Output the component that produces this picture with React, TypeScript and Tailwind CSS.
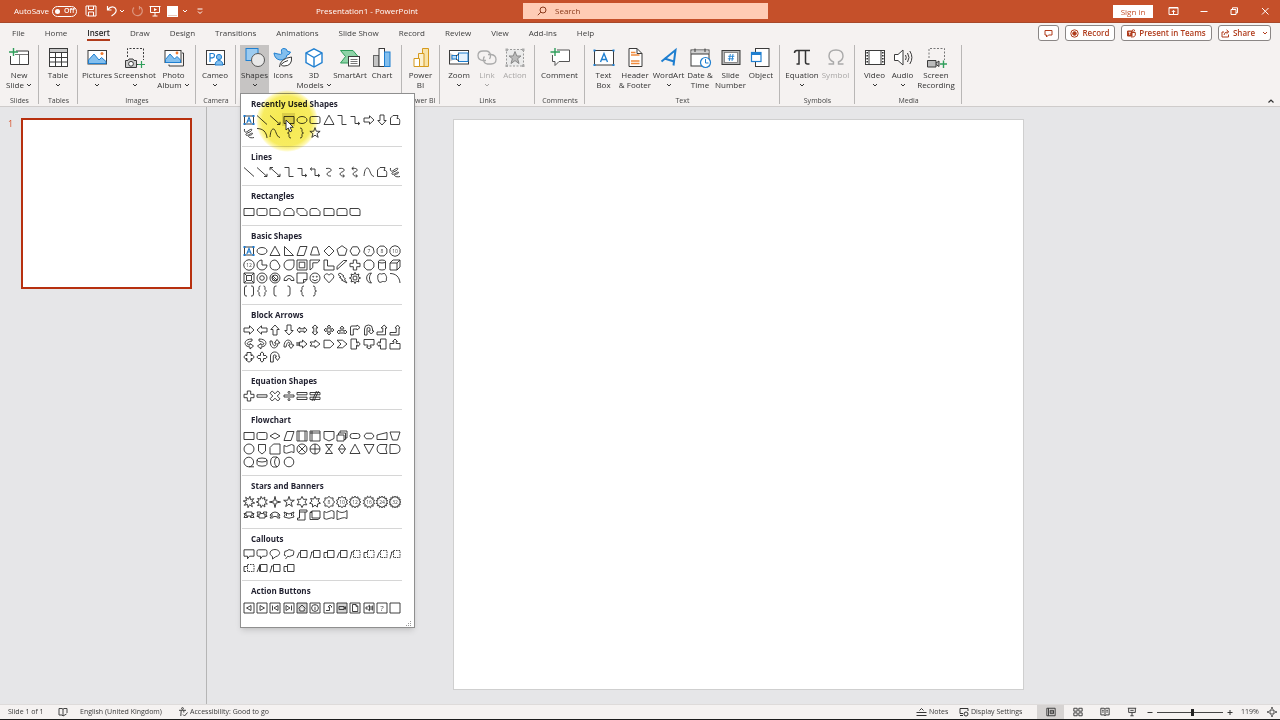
import React from "react";

/* ---------- geometry helpers for the shape gallery (12 x 12 tiles) ---------- */
const pt = (r: number, deg: number, cx = 6, cy = 6) =>
  `${(cx + r * Math.cos((deg * Math.PI) / 180)).toFixed(2)} ${(cy + r * Math.sin((deg * Math.PI) / 180)).toFixed(2)}`;
const poly = (n: number, r = 5, rot = -90) =>
  "M" + Array.from({ length: n }, (_, i) => pt(r, rot + (360 / n) * i)).join("L") + "Z";
const star = (n: number, r = 5, inner = 2.2, rot = -90) =>
  "M" + Array.from({ length: n * 2 }, (_, i) => pt(i % 2 ? inner : r, rot + (180 / n) * i)).join("L") + "Z";
const circ = (r: number, cx = 6, cy = 6) =>
  `M${cx - r} ${cy}a${r} ${r} 0 1 0 ${2 * r} 0a${r} ${r} 0 1 0 ${-2 * r} 0`;

const RECT = "M1 2.5H11V9.5H1Z";
const ROUND = "M2.5 2.5H9.5Q11 2.5 11 4V8Q11 9.5 9.5 9.5H2.5Q1 9.5 1 8V4Q1 2.5 2.5 2.5Z";
const SQUARE = "M1 1H11V11H1Z";
const OVAL = "M1 6a5 3.5 0 1 0 10 0a5 3.5 0 1 0 -10 0";
const TRI = "M6 1.2L11 10.5H1Z";
const LINE = "M1 1.5L11 10.5";
const LINE_ARROW = "M1 1.5L11 10.5M11 7.8V10.5H8";
const LINE_DOUBLE = "M1 1.5L11 10.5M11 7.8V10.5H8M1 4.2V1.5H4";
const ELBOW = "M1.5 1.5H6V10.5H10.5";
const ELBOW_ARROW = "M1.5 2.5H6V9.5H10.5M9 8L10.8 9.5L9 11";
const ELBOW_DOUBLE = "M1.5 3H6V9.5H10.5M9 8L10.8 9.5L9 11M3 1.5L1.2 3L3 4.5";
const CURVE = "M3 2.5C9 1.5 9.5 5 6 6C3 7 3.5 10.5 8 10";
const RIGHT = "M1 4H6.5V1.8L11 6L6.5 10.2V8H1Z";
const LEFT = "M11 4H5.5V1.8L1 6L5.5 10.2V8H11Z";
const UP = "M4 11V5.5H1.8L6 1L10.2 5.5H8V11Z";
const DOWN = "M4 1V6.5H1.8L6 11L10.2 6.5H8V1Z";
const FREEFORM = "M1.5 10.5V4L4 1.5H9L8 4.5C11 4 11 6 10.5 10.5Z";
const SCRIBBLE = "M1.5 2C1 5.5 2.5 6 5 4S9.5 1.5 8.5 3.5S2 6 3 8S9.5 4.5 9.5 6.5S4.5 8 5.5 9.5S9 11 11 10.5";
const ARC = "M1 1.5C7 1.5 10.5 5 11 11";
const WAVE_LINE = "M1 10C1.5 6 2 2 4.5 2S7 10 11 10.5";
const LBRACE = "M8 1Q6 1 6 2.5V4.5Q6 6 4.5 6Q6 6 6 7.5V9.5Q6 11 8 11";
const RBRACE = "M4 1Q6 1 6 2.5V4.5Q6 6 7.5 6Q6 6 6 7.5V9.5Q6 11 4 11";
const CROSS = "M4.3 1H7.7V4.3H11V7.7H7.7V11H4.3V7.7H1V4.3H4.3Z";
const CLEFT = "M4.5 2.5H11V9.5H4.5Z";

type Shape = { d: string; text?: string; box?: boolean; dashed?: string; shade?: boolean };
const s = (...d: string[]): Shape[] => d.map((v) => ({ d: v }));
const BOX: Shape = { d: "", box: true };
const numbered = (d: string, text: string): Shape => ({ d, text });

type Section = { title: string; shapes: Shape[] };
const sections: Section[] = [
  {
    title: "Recently Used Shapes",
    shapes: [
      BOX,
      ...s(LINE, LINE_ARROW, RECT, OVAL, ROUND, TRI, ELBOW, ELBOW_ARROW, RIGHT, DOWN, FREEFORM),
      ...s(SCRIBBLE, ARC, WAVE_LINE, LBRACE, RBRACE, star(5, 5.4, 2.2)),
    ],
  },
  {
    title: "Lines",
    shapes: s(
      LINE, LINE_ARROW, LINE_DOUBLE, ELBOW, ELBOW_ARROW, ELBOW_DOUBLE, CURVE,
      CURVE + "M6.8 8.5L8.5 10L6.8 11.4", CURVE + "M6.8 8.5L8.5 10L6.8 11.4M4.6 1L2.8 2.5L4.6 4",
      WAVE_LINE, FREEFORM, SCRIBBLE,
    ),
  },
  {
    title: "Rectangles",
    shapes: s(
      RECT,
      ROUND,
      "M1 2.5H8L11 5.5V9.5H1Z",
      "M3.5 2.5H8.5L11 5.5V9.5H1V5.5Z",
      "M1 2.5H8L11 5.5V9.5H4L1 6.5Z",
      "M3 2.5H8L11 5.5V9.5H1V4.5Q1 2.5 3 2.5Z",
      "M1 2.5H9Q11 2.5 11 4.5V9.5H1Z",
      "M3 2.5H9Q11 2.5 11 4.5V9.5H1V4.5Q1 2.5 3 2.5Z",
      "M1 2.5H9Q11 2.5 11 4.5V9.5H3Q1 9.5 1 7.5Z",
    ),
  },
  {
    title: "Basic Shapes",
    shapes: [
      BOX,
      ...s(OVAL, TRI, "M1.5 1.5L10.5 10.5H1.5Z", "M4 1.5H11L8 10.5H1Z", "M4 2H8L10.5 10H1.5Z", poly(4), poly(5, 5.3), "M3.5 1.8H8.5L11 6L8.5 10.2H3.5L1 6Z"),
      numbered(poly(7, 5.3), "7"),
      numbered(poly(8, 5.3, -67.5), "8"),
      numbered(poly(10, 5.3), "10"),
      numbered(poly(12, 5.3), "12"),
      ...s(
        "M6 1A5 5 0 1 0 11 6H6Z",
        "M6 1A5 5 0 1 0 11 7L8 2Z",
        "M11 1H6A5 5 0 1 0 11 6Z",
        SQUARE + "M3.2 3.2H8.8V8.8H3.2Z",
        "M1 1H11L8.5 3.8H3.8V8.5L1 11Z",
        "M1 1H4.5V7H11V11H1Z",
        "M1 10.5V7.5L7.5 1.5H11Z",
        CROSS,
        poly(8, 5.3, -67.5),
        "M2.5 2.5a3.5 1.5 0 1 0 7 0a3.5 1.5 0 1 0 -7 0V9.5a3.5 1.5 0 0 0 7 0V2.5",
        "M1 4L4 1H11V8L8 11H1ZM1 4H8V11M8 4L11 1",
        SQUARE + "M3.5 3.5H8.5V8.5H3.5ZM1 1L3.5 3.5M11 1L8.5 3.5M1 11L3.5 8.5M11 11L8.5 8.5",
        circ(5) + circ(2.3),
        circ(5) + circ(3) + "M3.9 3.9L8.1 8.1M2.7 4.8L7.2 9.3",
        "M1 8.5A5 5 0 0 1 11 8.5H8A2 2 0 0 0 4 8.5Z",
        "M1 1H11V7.5L7.5 11H1ZM7.5 11V7.5H11",
        circ(5) + circ(0.5, 4.2, 4.7) + circ(0.5, 7.8, 4.7) + "M3.3 7.5Q6 10 8.7 7.5",
        "M6 10.8L1.6 6C0 3 4 0 6 3.2C8 0 12 3 10.4 6Z",
        "M4 1L8 4L7 4.5L9.5 7L8.5 7.5L11 11L5.5 8L6.5 7.5L3.5 5.5L5 5L2 2.5Z",
        star(8, 5.6, 3.4) + circ(2),
        "M8.5 1C2 1 2 11 8.5 11C5.8 8.5 5.8 3.5 8.5 1Z",
        "M3 2C4.5 1 5 2.5 6 2S9 1 9.5 2.5S11 5 10.5 6S11 9 9.5 9.5S7 9 6 9.7S3 11 2.5 9S1.5 7 1.8 6S1 3 3 2Z",
        ARC,
        "M4 1H3Q1.5 1 1.5 3V9Q1.5 11 3 11H4M8 1H9Q10.5 1 10.5 3V9Q10.5 11 9 11H8",
        "M4.5 1Q3 1 3 2.5V4.5L1.5 6L3 7.5V9.5Q3 11 4.5 11M7.5 1Q9 1 9 2.5V4.5L10.5 6L9 7.5V9.5Q9 11 7.5 11",
        "M7.5 1H7Q5 1 5 3V9Q5 11 7 11H7.5",
        "M4.5 1H5Q7 1 7 3V9Q7 11 5 11H4.5",
        LBRACE,
        RBRACE,
      ),
    ],
  },
  {
    title: "Block Arrows",
    shapes: s(
      RIGHT, LEFT, UP, DOWN,
      "M1 6L3.8 3V4.8H8.2V3L11 6L8.2 9V7.2H3.8V9Z",
      "M6 1L9 3.8H7.2V8.2H9L6 11L3 8.2H4.8V3.8H3Z",
      "M6 1L7.8 2.8H6.9V5.1H9.2V4.2L11 6L9.2 7.8V6.9H6.9V9.2H7.8L6 11L4.2 9.2H5.1V6.9H2.8V7.8L1 6L2.8 4.2V5.1H5.1V2.8H4.2Z",
      "M6 2L8 4.2H6.9V7H9V6L11 8L9 10V9H3V10L1 8L3 6V7H5.1V4.2H4Z",
      "M1.5 11V3Q1.5 2 3 2H8V1L11 3.5L8 6V5H4.3V11Z",
      "M1.5 11V5A4 4 0 0 1 9.5 5V7H11L8.2 10L5.4 7H7V5A1.5 1.5 0 0 0 4 5V11Z",
      "M1 8H6.8V4H5L8.2 1L11 4H9.5V10.8H1Z",
      "M1 8.5H7.2V4H6L8.6 1L11 4H10V11H1Z",
      "M9 1C2 1 1 5 3 7.5Q5 9 7 9V11L10.5 8L7 5.5V7C3 7 3 4 9 3Z",
      "M3 1C10 1 11 5 9 7.5Q7 9 5 9V11L1.5 8L5 5.5V7C9 7 9 4 3 3Z",
      "M1 3C1 10 5 11 7.5 9Q9 7 9 5H11L8 1.5L5.5 5H7C7 9 4 9 3 3Z",
      "M1 9C1 2 5 1 7.5 3Q9 5 9 7H11L8 10.5L5.5 7H7C7 3 4 3 3 9Z",
      "M3.5 4H6.5V2L11 6L6.5 10V8H3.5ZM1 4V8M2.2 4V8",
      "M1 4H6V2L11 6L6 10V8H1L2.8 6Z",
      "M1 2.2H7L11 6L7 9.8H1Z",
      "M1 2.2H6.5L11 6L6.5 9.8H1L5 6Z",
      "M2 1H7.5V4.8H9V3.5L11.2 6L9 8.5V7.2H7.5V11H2Z",
      "M1 1.5H11V7H7.2V9H8.5L6 11L3.5 9H4.8V7H1Z",
      "M10 1H4.5V4.8H3V3.5L0.8 6L3 8.5V7.2H4.5V11H10Z",
      "M1 11H11V5.5H7.2V3.5H8.5L6 1L3.5 3.5H4.8V5.5H1Z",
      "M4 1.5H8V4.5H9V3.5L11.2 6L9 8.5V7.5H8V9H9L6 11.2L3 9H4V7.5H3V8.5L0.8 6L3 3.5V4.5H4Z",
      "M6 0.8L8 3H7.5V4.5H9V4L11.2 6L9 8V7.5H7.5V9H8L6 11.2L4 9H4.5V7.5H3V8L0.8 6L3 4V4.5H4.5V3H4Z",
      "M1.5 11V5A4.2 4 0 0 1 10 5V6H11L8.5 9.5L6 6H7.2V5A1.5 1.5 0 0 0 4.3 5V11Z",
    ),
  },
  {
    title: "Equation Shapes",
    shapes: s(
      CROSS,
      "M1 4.8H11V7.2H1Z",
      "M3.2 1L6 3.8L8.8 1L11 3.2L8.2 6L11 8.8L8.8 11L6 8.2L3.2 11L1 8.8L3.8 6L1 3.2Z",
      "M1 5H11V7H1Z" + circ(1, 6, 2.4) + circ(1, 6, 9.6),
      "M1 2.5H11V4.8H1ZM1 7.2H11V9.5H1Z",
      "M1 2.5H11V4.8H1ZM1 7.2H11V9.5H1ZM3 11L7.5 1M5 11L9.5 1",
    ),
  },
  {
    title: "Flowchart",
    shapes: s(
      RECT, ROUND, "M6 3L11 6L6 9L1 6Z", "M4 1.5H11L8 10.5H1Z",
      SQUARE + "M3 1V11M9 1V11", SQUARE + "M3 1V11M1 3H11",
      "M1 1.5H11V8.5L6 11L1 8.5Z",
      "M1 5H8V11H1ZM2.5 5V3H9.5V9.5H8M4 3V1H11V8H9.5",
      "M3.5 3.5H8.5Q11 3.5 11 6T8.5 8.5H3.5Q1 8.5 1 6T3.5 3.5Z",
      "M3.2 3.2H8.8L11 6L8.8 8.8H3.2L1 6Z",
      "M1 5L11 2.5V9.5H1Z", "M1 2H11L8.5 10H3.5Z",
      circ(5), "M2.5 1.5H9.5V8L6 11L2.5 8Z", "M4.5 1H11V11H1V4.5Z",
      "M1 2.5Q3.5 4.5 6 2.5T11 2.5V9.5Q8.5 8 6 9.5T1 9.5Z",
      circ(5) + "M2.5 2.5L9.5 9.5M9.5 2.5L2.5 9.5",
      circ(5) + "M6 1V11M1 6H11",
      "M2.5 1.5H9.5L2.5 10.5H9.5Z", "M6 1L9.5 6L6 11L2.5 6ZM2.5 6H9.5",
      TRI, "M1 1.5H11L6 10.8Z",
      "M4 1.5H11Q8.5 6 11 10.5H4Q1 9.5 1 6T4 1.5Z",
      "M1 1.5H6Q11 1.5 11 6T6 10.5H1Z",
      circ(4.8, 5.8, 6) + "M6 10.8H11",
      "M1 4a5 2 0 1 0 10 0a5 2 0 1 0 -10 0V8.2a5 2 0 0 0 10 0V4",
      "M4 1H8Q10.5 2 10.5 6T8 11H4Q1.5 10 1.5 6T4 1ZM8 1Q5.5 3 5.5 6T8 11",
      circ(4.8),
    ),
  },
  {
    title: "Stars and Banners",
    shapes: [
      ...s(star(8, 5.8, 2.8, -80), star(9, 5.7, 3.2, -60), star(4, 5.6, 1.5), star(5, 5.6, 2.2), star(6, 5.6, 3), star(7, 5.6, 3.2)),
      numbered(star(8, 5.8, 4.2), "8"),
      numbered(star(10, 5.8, 4.3), "10"),
      numbered(star(12, 6, 4.3), "12"),
      numbered(star(12, 6, 4.3, -75), "16"),
      numbered(star(14, 6, 4.4), "24"),
      numbered(star(16, 6, 4.5), "32"),
      ...s(
        "M1 4.5H3V3H9V4.5H11L10 6.5L11 8.5H7.5V7H4.5V8.5H1L2 6.5ZM3 4.5V7H4.5M9 4.5V7H7.5",
        "M1 3H4.5V4.5H7.5V3H11L10 5L11 7.5H9V9H3V7.5H1L2 5ZM3 7.5V5H4.5M9 7.5V5H7.5",
        "M1 6Q3 3 6 3T11 6L10 7.5L11 9H8.5L7.5 7.5H4.5L3.5 9H1L2 7.5ZM3 4.5V8M9 4.5V8",
        "M1 3L3.5 4Q6 6 8.5 4L11 3L10 5.5L11 8L9 8.5Q6 10 3 8.5L1 8L2 5.5ZM3.5 4V7M8.5 4V7",
        "M3.5 1H11V3H9V11H1.5V9H3.5ZM3.5 3H9M3.5 3V9",
        "M1 3.5L3 2H11V9L9 10.5H1ZM3 2V9H11M1 3.5H3",
        "M1 2.5Q3.5 4.5 6 2.5T11 2.5V9.5Q8.5 8 6 9.5T1 9.5Z",
        "M1 1.5L3.5 3Q6 4 8.5 3L11 1.5V9.5Q8.5 8 6 9T1 10.5Z",
      ),
    ],
  },
  {
    title: "Callouts",
    shapes: [
      ...s(
        "M1 1.8H11V8.2H6.5L4.5 10.8V8.2H1Z",
        "M2.5 1.8H9.5Q11 1.8 11 3.5V6.5Q11 8.2 9.5 8.2H6.5L4.5 10.8V8.2H2.5Q1 8.2 1 6.5V3.5Q1 1.8 2.5 1.8Z",
        "M3.5 8.5C-1 6 1 1.5 6 1.5S13 7 6.5 8.8L3.5 11Z",
        "M3 8Q0.5 8 1.5 5.5Q1 2.5 4 2.8Q6 0.5 8 2.2Q11.5 2 10.7 5Q11 8 8.2 7.8Q6 9.5 4.8 8.2L2.5 11",
        CLEFT + "M1 10L3.5 4",
        CLEFT + "M1 10.5L2.5 6V4H4.5",
        CLEFT + "M4.5 4.5H1V9.5H3",
        CLEFT + "M1 10L3.5 4",
      ),
      { d: "M1 10.5L2.5 6V4H4.5", dashed: CLEFT },
      { d: "M4.5 4.5H1V9.5H3", dashed: CLEFT },
      { d: "M1 10L3.5 4", dashed: CLEFT },
      { d: "M1 10.5L2.5 6V4H4.5", dashed: CLEFT },
      { d: "M4.5 4.5H1V9.5H3", dashed: CLEFT },
      ...s(CLEFT + "M1 10L3.5 4M3.5 2.5V9.5", CLEFT + "M1 10.5L2.5 6V4H4.5", CLEFT + "M4.5 4.5H1V9.5H3"),
    ],
  },
  {
    title: "Action Buttons",
    shapes: [
      ...s(
        SQUARE + "M8 3.5V8.5L3.5 6Z",
        SQUARE + "M4 3.5V8.5L8.5 6Z",
        SQUARE + "M9 3.5V8.5L5 6ZM3.5 3.5V8.5",
        SQUARE + "M3 3.5V8.5L7 6ZM8.5 3.5V8.5",
      ),
      { d: SQUARE + "M2.5 6.5L6 3L9.5 6.5M3.8 6.5V9H8.2V6.5", shade: true },
      { d: SQUARE + circ(3.4) + "M6 5V8M6 3.6V4.2" },
      { d: SQUARE + "M3 8.5H6.5V5H5L7 3L9 5H8" },
      { d: SQUARE + "M3 4.5H8V7.5H3ZM8 5.5L9.5 4.8V7.2L8 6.5", shade: true },
      { d: SQUARE + "M3.5 2.5H7L8.8 4.3V9.5H3.5ZM7 2.5V4.3H8.8" },
      { d: SQUARE + "M3 5H4.5L6.5 3.2V8.8L4.5 7H3ZM8 4V8M9.4 3.5V8.5" },
      { d: SQUARE, text: "?" },
      { d: SQUARE },
    ],
  },
];

function ShapeTile({ shape }: { shape: Shape }) {
  if (shape.box) {
    return (
      <svg viewBox="0 0 12 12" className="h-3 w-3" fill="none">
        <rect x="1.5" y="2" width="9" height="8" stroke="#2b2b2b" strokeWidth="0.9" />
        <path d="M3.8 9L6 3.2L8.2 9M4.6 7H7.4" stroke="#1b7ad0" strokeWidth="1.1" />
        <path d="M0.5 1H2.5V3H0.5ZM9.5 1H11.5V3H9.5ZM0.5 9H2.5V11H0.5ZM9.5 9H11.5V11H9.5Z" fill="#1b7ad0" />
      </svg>
    );
  }
  return (
    <svg viewBox="0 0 12 12" className="h-3 w-3 overflow-visible" fill="none" stroke="#2b2b2b" strokeWidth="0.9">
      <path d={shape.d} fill={shape.shade ? "#d4d4d4" : "none"} />
      {shape.dashed && <path d={shape.dashed} strokeDasharray="1.6 0.9" />}
      {shape.text && (
        <text x="6" y={shape.text === "?" ? 9 : 7.8} textAnchor="middle" fontSize={shape.text === "?" ? 8 : 5} fill="#444444" stroke="none">
          {shape.text}
        </text>
      )}
    </svg>
  );
}

/* ---------- small helpers ---------- */
const Chevron = ({ className = "" }: { className?: string }) => (
  <svg viewBox="0 0 6 4" className={`inline-block h-1 w-1.5 shrink-0 ${className}`} fill="none" stroke="currentColor" strokeWidth="1">
    <path d="M1 1L3 3L5 1" />
  </svg>
);

const Ico = ({ children }: { children: React.ReactNode }) => (
  <svg viewBox="0 0 20 20" className="h-5 w-5 shrink-0 overflow-visible" fill="none" stroke="#3b3b3b" strokeWidth="1">
    {children}
  </svg>
);

const GREEN = "#2f9e5b";
const BLUE = "#1f7fd0";
const SKY = "#83bfee";

const icons: Record<string, React.ReactNode> = {
  newSlide: (
    <>
      <path d="M8 3.5H19.5V16.5H1.5V7" fill="#fff" stroke="none" />
      <path d="M7 3H19.5V16.5H1.5V8" />
      <path d="M6 6.5H19M10.5 6.5V16" stroke="#777" />
      <path d="M4.5 0V8M0 4H9" stroke={GREEN} strokeWidth="1.4" />
    </>
  ),
  table: (
    <>
      <rect x="1.5" y="0.5" width="18" height="18" fill="#fff" />
      <rect x="2" y="1" width="17" height="3" fill="#c8c8c8" stroke="none" />
      <path d="M1.5 4.5H19.5M1.5 9.5H19.5M1.5 14H19.5M7.5 4.5V18.5M13.5 4.5V18.5" />
    </>
  ),
  pictures: (
    <>
      <rect x="1" y="2.5" width="18.5" height="13.5" fill="#fff" />
      <path d="M1.5 12L7 6L12 12L14.5 9.5L19 13.5V15.5H1.5Z" fill={SKY} stroke={BLUE} />
      <circle cx="15" cy="5.5" r="1.5" fill="#f07a30" stroke="none" />
    </>
  ),
  screenshot: (
    <>
      <path d="M2.5 9V0.5H18.5V12M11 16.5H13" strokeDasharray="2 1.5" />
      <path d="M0.5 12.5H3L4 11H8L9 12.5H11.5V19.5H0.5Z" fill="#ccc" />
      <circle cx="6" cy="15.8" r="2.4" fill="#fff" />
      <path d="M16.5 13V20M13 16.5H20" stroke={GREEN} strokeWidth="1.2" />
    </>
  ),
  album: (
    <>
      <path d="M5 16.5V18H19.5V5H18" />
      <rect x="1" y="2.5" width="16" height="12" fill="#fff" />
      <path d="M1.5 11.5L6 6L10.5 11L13 8.5L16.5 12V14.5H1.5Z" fill={SKY} stroke={BLUE} />
      <circle cx="13" cy="5" r="1.4" fill="#f07a30" stroke="none" />
    </>
  ),
  cameo: (
    <>
      <rect x="1.5" y="2.5" width="18" height="14" fill="#fff" />
      <path d="M5 14V5.5H7.5Q9.5 5.5 9.5 7.5T7.5 9.8H5" stroke={BLUE} strokeWidth="1.2" />
      <circle cx="14" cy="9" r="2.6" fill={SKY} stroke={BLUE} />
      <path d="M10 17Q10.5 12.5 14 12.5T18 17Z" fill={SKY} stroke={BLUE} />
    </>
  ),
  shapes: (
    <>
      <rect x="1" y="0.5" width="12" height="12" fill="#9ccbf0" stroke={BLUE} />
      <circle cx="13" cy="12" r="6.5" fill="#e8e8e8" stroke="#555" />
    </>
  ),
  icons: (
    <>
      <path d="M1 5L5 6Q8 7 9 5.5Q7 0.5 11 0.5Q14 0.5 14.5 3.5L17.5 4Q16.5 7 14 7Q13 12 7 12Q1.5 11 1 5Z" fill={SKY} stroke={BLUE} />
      <path d="M6.5 19Q7 10.5 18.5 9Q19.5 18 11 18Q9 18 8 16.5M8 16.5Q11 13.5 15 12.5" fill="#fff" />
    </>
  ),
  cube: (
    <>
      <path d="M10 0.8L18 5V14.5L10 19L2 14.5V5Z" fill="#fff" stroke={BLUE} strokeWidth="1.4" />
      <path d="M2 5L10 9.5L18 5M10 9.5V19" stroke={BLUE} strokeWidth="1.4" />
    </>
  ),
  smartart: (
    <>
      <path d="M0.5 2.5H13L18 8.5L13 15H0.5L5.5 8.5Z" fill="#8ed3a7" stroke={GREEN} />
      <rect x="8.5" y="8.5" width="11" height="9.5" fill="#fff" />
      <path d="M10.5 11.5H17.5M10.5 13.5H17.5M10.5 15.5H17.5" stroke="#777" />
    </>
  ),
  chart: (
    <>
      <rect x="1.5" y="7.5" width="5.5" height="11" fill="#c4c4c4" stroke="#666" />
      <rect x="7" y="0.5" width="5.5" height="18" fill="#fff" />
      <rect x="12.5" y="4" width="5.5" height="14.5" fill={SKY} stroke={BLUE} />
    </>
  ),
  powerbi: (
    <>
      <path d="M11.5 0.5H17.5V18.5H11.5Z" fill="#f8e3a8" stroke="#d59a1d" />
      <path d="M7.5 5.5H13V18.5H7.5Z" fill="#fbf0cf" stroke="#d59a1d" />
      <path d="M3 10.5H8.5V18.5H3Z" fill="#fff" stroke="#d59a1d" />
    </>
  ),
  zoom: (
    <>
      <rect x="0.5" y="2.5" width="19" height="13.5" fill="#fff" />
      <path d="M1 5L7 8V10.5L1 13.5Z" fill="#c8c8c8" stroke="none" />
      <rect x="9.5" y="5" width="9.5" height="8.5" fill="#e6f2fc" stroke={BLUE} />
      <rect x="3" y="7.5" width="4.5" height="3.5" fill="#bcdcf5" stroke={BLUE} />
      <path d="M7 8L10 6M7 11L10 13" stroke="#333" />
    </>
  ),
  link: (
    <>
      <path d="M9 12.5H6Q1 12 1 7.5T6 3H9.5Q13.5 3.5 13.5 8Q13.5 9.5 12.5 11" stroke="#aaa" strokeWidth="1.3" />
      <path d="M11 6.5H14Q19 7 19 11.5T14 16H10.5Q6.5 15.5 6.5 11Q6.5 9.5 7.5 8.5" stroke="#aaa" strokeWidth="1.3" />
    </>
  ),
  action: (
    <>
      <rect x="1.5" y="1.5" width="17" height="16.5" fill="#ebebeb" stroke="#999" strokeDasharray="2 1.5" />
      <path d="M10 3.5L11.8 8H16L12.6 10.7L14 15.5L10 12.6L6 15.5L7.4 10.7L4 8H8.2Z" fill="#bbb" stroke="#888" />
      <path d="M0.5 0.5H3V3H0.5ZM17 0.5H19.5V3H17ZM0.5 16.5H3V19H0.5ZM17 16.5H19.5V19H17Z" fill="#aaa" stroke="none" />
    </>
  ),
  comment: (
    <>
      <path d="M7 2H19.5V13.5H9L5 17.5V13.5H2.5V7" fill="#fff" stroke="#555" />
      <path d="M5 0V8M0.5 4H10" stroke={GREEN} strokeWidth="1.4" />
    </>
  ),
  textbox: (
    <>
      <rect x="0.5" y="2.5" width="19" height="14.5" fill="#fff" />
      <path d="M6.5 14L10 5.5L13.5 14M7.6 11.5H12.4" stroke={BLUE} strokeWidth="1.4" />
      <path d="M-0.5 1.5H1.5V3.5H-0.5ZM18.5 1.5H20.5V3.5H18.5ZM-0.5 16H1.5V18H-0.5ZM18.5 16H20.5V18H18.5Z" fill={BLUE} stroke="none" />
    </>
  ),
  header: (
    <>
      <path d="M4 0.5H12L17 5.5V18.5H4Z" fill="#fff" />
      <path d="M12 0.5V5.5H17" />
      <path d="M6 4.5H10.5M6 7H14.5M6 13H14.5M6 15.5H14.5" stroke="#f08a3c" strokeWidth="1.4" />
    </>
  ),
  wordart: <path d="M2.5 13.5L16.5 2L14.5 17.5M5.5 10.5L15 13.5" stroke={BLUE} strokeWidth="2" />,
  date: (
    <>
      <rect x="1" y="2" width="18" height="16" fill="#fff" />
      <rect x="1.5" y="2.5" width="17" height="3.5" fill="#d0d0d0" stroke="none" />
      <path d="M1 6H19M5 0.5V4M15 0.5V4" />
      <circle cx="15.5" cy="14.5" r="5" fill="#fff" stroke={BLUE} strokeWidth="1.2" />
      <path d="M15.5 11V15H18.5" stroke={BLUE} />
    </>
  ),
  number: (
    <>
      <rect x="1" y="2.5" width="18" height="14" fill="#b8b8b8" />
      <rect x="3.5" y="4.5" width="13" height="10" fill="#fff" stroke="#777" strokeWidth="0.8" />
      <path d="M9.3 6L8.3 13M12 6L11 13M7.2 8.3H13.3M6.8 10.8H12.9" stroke={BLUE} strokeWidth="0.9" />
    </>
  ),
  object: (
    <>
      <rect x="4.5" y="0.5" width="13.5" height="18" fill="#fff" />
      <rect x="0.5" y="4.5" width="9.5" height="9" fill="#fff" stroke={BLUE} strokeWidth="1.2" />
      <path d="M0.5 6H10" stroke={BLUE} strokeWidth="2" />
    </>
  ),
  pi: <path d="M2.5 5Q2.5 2.5 5 2.5H18M7 2.5V16H4.5M13.5 2.5V14Q13.5 16 15.5 16H17.5" stroke="#333" strokeWidth="1.5" />,
  omega: <path d="M2.5 16H7.5V14Q3 12 3 8Q3 2 10 2T17 8Q17 12 12.5 14V16H17.5" stroke="#aaa" strokeWidth="1.4" />,
  video: (
    <>
      <rect x="0.5" y="2.5" width="19" height="14" fill="#fff" />
      <path d="M4 3V16M16 3V16" />
      <path d="M2.2 4V16M17.8 4V16" stroke="#333" strokeWidth="1.6" strokeDasharray="1.6 1.4" />
    </>
  ),
  audio: (
    <>
      <path d="M1.5 6.5H5L10 2V17L5 12.5H1.5Z" fill="#fff" />
      <path d="M12.5 7Q14 9.5 12.5 12M14.5 5Q17.5 9.5 14.5 14M16.8 3Q21 9.5 16.8 16" />
    </>
  ),
  recording: (
    <>
      <path d="M3 10V0.5H18.5V12" strokeDasharray="2 1.5" stroke="#777" />
      <path d="M1.5 12.5H10V19H1.5ZM10 15L13 13V18.5L10 16.5" fill="#bbb" />
      <path d="M17.5 12.5V20M14 16H21" stroke={GREEN} strokeWidth="1.4" />
    </>
  ),
};

type Tool = { icon: string; lines: string[]; width: string; more?: boolean; off?: boolean };
type Group = { id: string; label: string; width: string; pad: string; tools: Tool[] };
const groups: Group[] = [
  { id: "slides", label: "Slides", width: "w-[39px]", pad: "pl-0", tools: [{ icon: "newSlide", lines: ["New", "Slide"], width: "w-[38px]", more: true }] },
  { id: "tables", label: "Tables", width: "w-[39px]", pad: "pl-0", tools: [{ icon: "table", lines: ["Table"], width: "w-[38px]", more: true }] },
  {
    id: "images", label: "Images", width: "w-[118px]", pad: "pl-[2px]",
    tools: [
      { icon: "pictures", lines: ["Pictures"], width: "w-[34px]", more: true },
      { icon: "screenshot", lines: ["Screenshot"], width: "w-[42px]", more: true },
      { icon: "album", lines: ["Photo", "Album"], width: "w-[35px]", more: true },
    ],
  },
  { id: "camera", label: "Camera", width: "w-[40px]", pad: "pl-0", tools: [{ icon: "cameo", lines: ["Cameo"], width: "w-[38px]", more: true }] },
  {
    id: "illustrations", label: "", width: "w-[166px]", pad: "pl-[4px]",
    tools: [
      { icon: "shapes", lines: ["Shapes"], width: "w-[29px]", more: true },
      { icon: "icons", lines: ["Icons"], width: "w-[28px]" },
      { icon: "cube", lines: ["3D", "Models"], width: "w-[34px]", more: true },
      { icon: "smartart", lines: ["SmartArt"], width: "w-[38px]" },
      { icon: "chart", lines: ["Chart"], width: "w-[26px]" },
    ],
  },
  { id: "powerbi", label: "Power BI", width: "w-[38px]", pad: "pl-0", tools: [{ icon: "powerbi", lines: ["Power", "BI"], width: "w-[37px]" }] },
  {
    id: "links", label: "Links", width: "w-[95px]", pad: "pl-[5px]",
    tools: [
      { icon: "zoom", lines: ["Zoom"], width: "w-[28px]", more: true },
      { icon: "link", lines: ["Link"], width: "w-[28px]", more: true, off: true },
      { icon: "action", lines: ["Action"], width: "w-[28px]", off: true },
    ],
  },
  { id: "comments", label: "Comments", width: "w-[50px]", pad: "pl-0", tools: [{ icon: "comment", lines: ["Comment"], width: "w-[49px]" }] },
  {
    id: "text", label: "Text", width: "w-[195px]", pad: "pl-[3px]",
    tools: [
      { icon: "textbox", lines: ["Text", "Box"], width: "w-[31px]" },
      { icon: "header", lines: ["Header", "& Footer"], width: "w-[32px]" },
      { icon: "wordart", lines: ["WordArt"], width: "w-[35px]", more: true },
      { icon: "date", lines: ["Date &", "Time"], width: "w-[28px]" },
      { icon: "number", lines: ["Slide", "Number"], width: "w-[33px]" },
      { icon: "object", lines: ["Object"], width: "w-[28px]" },
    ],
  },
  {
    id: "symbols", label: "Symbols", width: "w-[75px]", pad: "pl-[4px]",
    tools: [
      { icon: "pi", lines: ["Equation"], width: "w-[36px]", more: true },
      { icon: "omega", lines: ["Symbol"], width: "w-[31px]", off: true },
    ],
  },
  {
    id: "media", label: "Media", width: "w-[107px]", pad: "pl-[5px]",
    tools: [
      { icon: "video", lines: ["Video"], width: "w-[29px]", more: true },
      { icon: "audio", lines: ["Audio"], width: "w-[27px]", more: true },
      { icon: "recording", lines: ["Screen", "Recording"], width: "w-[40px]" },
    ],
  },
];

function ShapesMenu() {
  return (
    <div className="absolute top-12 left-[4px] z-20 flex h-[535px] w-[175px] flex-col border border-[#8f8f8f] bg-white shadow-md">
      <div className="grid min-h-0 flex-1 grid-rows-[4fr_3fr_3fr_6fr_5fr_3fr_5fr_4fr_4fr_3fr] pl-px">
        {sections.map((sec, si) => (
          <section
            key={sec.title}
            className={`flex min-h-0 w-40 flex-col pb-[6px] ${si < sections.length - 1 ? "border-b border-[#d6d6d6]" : ""}`}
          >
            <h3 className="h-[19px] pl-[9px] text-left text-[8px] leading-[20px] font-bold whitespace-nowrap text-[#1f1f2e]">{sec.title}</h3>
            <div className="grid min-h-0 flex-1 auto-rows-fr grid-cols-12">
              {sec.shapes.map((shape, i) => (
                <button
                  key={i}
                  aria-label={`${sec.title} ${i + 1}`}
                  className={`flex min-h-0 items-center justify-center ${si === 0 && i === 3 ? "bg-[#e3e0dc]" : ""}`}
                >
                  <ShapeTile shape={shape} />
                </button>
              ))}
            </div>
          </section>
        ))}
      </div>
      <div className="flex h-[6px] shrink-0 items-end justify-end pr-0.5">
        <svg viewBox="0 0 6 6" className="h-1.5 w-1.5" fill="#999">
          <path d="M4 0H5V1H4ZM4 2H5V3H4ZM2 2H3V3H2ZM4 4H5V5H4ZM2 4H3V5H2ZM0 4H1V5H0Z" />
        </svg>
      </div>
    </div>
  );
}

function PointerSpot() {
  return (
    <>
      <div className="pointer-events-none absolute top-[45px] left-[20px] z-30 h-[62px] w-[62px] rounded-full bg-[radial-gradient(circle_closest-side,#f5e94e_0%,#f7ec60_80%,#fff9b8_94%,#ffffff_100%)] mix-blend-multiply" />
      <svg viewBox="0 0 10 14" className="pointer-events-none absolute top-[74px] left-[49px] z-40 h-3.5 w-2.5" fill="#fff" stroke="#222" strokeWidth="0.9">
        <path d="M1 1V11L3.3 9L5 12.8L6.8 12L5.2 8.3H8.3Z" />
      </svg>
    </>
  );
}

function ToolButton({ tool }: { tool: Tool }) {
  const open = tool.icon === "shapes";
  const inlineChevron = tool.more && tool.lines.length === 2;
  return (
    <button
      className={`flex h-12 shrink-0 flex-col items-center pt-[3px] text-[8px] leading-[11px] whitespace-nowrap ${tool.width} ${
        open ? "bg-[#c6c4c3]" : ""
      } ${tool.off ? "text-[#a9a7a6]" : "text-[#333333]"}`}
    >
      <Ico>{icons[tool.icon]}</Ico>
      <span className="mt-px">{tool.lines[0]}</span>
      {tool.lines[1] ? (
        <span className="-mt-px flex items-center gap-0.5">
          {tool.lines[1]}
          {inlineChevron && <Chevron />}
        </span>
      ) : (
        tool.more && (
          <span className="-mt-px flex h-[11px] items-center">
            <Chevron />
          </span>
        )
      )}
    </button>
  );
}

const tabs = ["File", "Home", "Insert", "Draw", "Design", "Transitions", "Animations", "Slide Show", "Record", "Review", "View", "Add-ins", "Help"];

function TitleBar() {
  return (
    <header className="flex h-[23px] shrink-0 items-center border-b border-[#a8492a] bg-[#c5502a] text-[8px] text-white">
      <div className="flex w-[316px] shrink-0 items-center pl-[14px]">
        <label htmlFor="autosave" className="w-[38px]">AutoSave</label>
        <button id="autosave" role="switch" aria-checked="false" className="flex h-[11px] w-[25px] items-center gap-1 rounded-full border border-white pl-[2px] text-[7px] font-semibold">
          <span className="h-[5px] w-[5px] rounded-full bg-white" />
          Off
        </button>
        <button aria-label="Save" className="ml-[8px]">
          <svg viewBox="0 0 12 12" className="h-3 w-3" fill="none" stroke="#fff" strokeWidth="1">
            <path d="M1 1H11V11H2.5L1 9.5ZM3.5 1V4.5H8.5V1M3.5 11V7H8.5V11" />
          </svg>
        </button>
        <button aria-label="Undo" className="ml-[9px] flex items-center">
          <svg viewBox="0 0 12 12" className="h-3 w-3" fill="none" stroke="#fff" strokeWidth="1.2">
            <path d="M1.5 1V5H5.5M1.5 5Q4.5 1 8 2.2Q11 4 9.8 7Q9 9 5.5 11" />
          </svg>
          <Chevron className="ml-px" />
        </button>
        <button aria-label="Redo" className="ml-[6px] opacity-40">
          <svg viewBox="0 0 12 12" className="h-3 w-3" fill="none" stroke="#fff" strokeWidth="1.2">
            <path d="M8.5 1.5A4.8 4.8 0 1 1 3 2.5M8.5 1V4.5" />
          </svg>
        </button>
        <button aria-label="Start slide show" className="ml-[6px]">
          <svg viewBox="0 0 12 12" className="h-3 w-3" fill="none" stroke="#fff" strokeWidth="1">
            <path d="M0.5 1.5H11.5M1.5 1.5V7.5H10.5V1.5M6 7.5V11M3.5 11H8.5" />
            <path d="M5 3L8 4.6L5 6.2Z" fill="#fff" stroke="none" />
          </svg>
        </button>
        <button aria-label="Fill colour" className="ml-[6px] flex items-center gap-1">
          <span className="flex h-[11px] w-[11px] flex-col justify-end bg-white p-px">
            <span className="h-px bg-[#e9c9bd]" />
          </span>
          <Chevron />
        </button>
        <button aria-label="Customise toolbar" className="ml-[8px]">
          <svg viewBox="0 0 8 8" className="h-2 w-2" fill="none" stroke="#fff">
            <path d="M1.5 2H6.5M2 4.5L4 6.5L6 4.5" />
          </svg>
        </button>
      </div>
      <div className="w-[207px] shrink-0 whitespace-nowrap">Presentation1 - PowerPoint</div>
      <label className="flex h-4 w-[245px] items-center gap-2 bg-[#ffccb5] pl-[14px] text-[#8a3a1c]">
        <svg viewBox="0 0 10 10" className="h-2.5 w-2.5 shrink-0" fill="none" stroke="currentColor">
          <circle cx="6" cy="4" r="3" />
          <path d="M3.8 6.2L0.8 9.2" />
        </svg>
        <input type="text" aria-label="Search" placeholder="Search" className="min-w-0 flex-1 bg-transparent outline-none placeholder:text-[#8a3a1c] placeholder:opacity-100" />
      </label>
      <div className="ml-auto flex items-center pr-[10px]">
        <button className="h-[13px] w-10 bg-white leading-[13px] text-[#c5502a]">Sign in</button>
        <button aria-label="Ribbon display options" className="ml-[15px]">
          <svg viewBox="0 0 11 10" className="h-2.5 w-[11px]" fill="none" stroke="#fff">
            <path d="M1 1.5H10V8.5H1Z" />
            <path d="M1 2H10M5.5 8V4.5M3.8 6L5.5 4.3L7.2 6" />
          </svg>
        </button>
        <button aria-label="Minimise" className="ml-[20px]">
          <svg viewBox="0 0 10 10" className="h-2.5 w-2.5" stroke="#fff">
            <path d="M1.5 5.5H8.5" />
          </svg>
        </button>
        <button aria-label="Restore" className="ml-[20px]">
          <svg viewBox="0 0 10 10" className="h-2.5 w-2.5" fill="none" stroke="#fff">
            <path d="M2 3.5H7V8.5H2ZM3.5 3.5V1.8H8.5V6.8H7" />
          </svg>
        </button>
        <button aria-label="Close" className="ml-[21px]">
          <svg viewBox="0 0 10 10" className="h-2.5 w-2.5" fill="none" stroke="#fff">
            <path d="M2 2L8.5 8.5M8.5 2L2 8.5" />
          </svg>
        </button>
      </div>
    </header>
  );
}

const actionClass = "flex h-4 items-center justify-center gap-[3px] rounded-[3px] border border-[#8a8685] bg-white text-[8px] font-semibold whitespace-nowrap text-[#b03c1c]";

function TabRow() {
  return (
    <div className="flex h-[22px] shrink-0 items-center pr-[9px] pl-[12px]">
      <nav className="flex h-full gap-5 text-[8px]">
        {tabs.map((t) => (
          <a key={t} href="#" className={`flex flex-col pt-[4px] leading-[12px] whitespace-nowrap ${t === "Insert" ? "font-semibold text-[#262626]" : "text-[#3d3d3d]"}`}>
            {t}
            {t === "Insert" && <span className="h-[2px] bg-[#b03c1c]" />}
          </a>
        ))}
      </nav>
      <div className="ml-auto flex items-center gap-[6px] pb-[2px]">
        <button aria-label="Comments" className={`${actionClass} w-[21px]`}>
          <svg viewBox="0 0 9 9" className="h-[9px] w-[9px]" fill="none" stroke="currentColor">
            <path d="M1 1.5H8V6H4.5L2.5 8V6H1Z" />
          </svg>
        </button>
        <button className={`${actionClass} w-[50px]`}>
          <svg viewBox="0 0 9 9" className="h-[9px] w-[9px] shrink-0" fill="none" stroke="currentColor">
            <circle cx="4.5" cy="4.5" r="3.7" />
            <circle cx="4.5" cy="4.5" r="1.8" fill="currentColor" />
          </svg>
          Record
        </button>
        <button className={`${actionClass} w-[91px]`}>
          <svg viewBox="0 0 9 9" className="h-[9px] w-[9px] shrink-0" fill="none" stroke="currentColor">
            <path d="M0.5 2H5V7H0.5Z" fill="currentColor" />
            <path d="M1.5 3.3H4M2.7 3.3V6" stroke="#fff" strokeWidth="0.8" />
            <path d="M5 3.5H8.3V6.5Q7.5 8.3 4 8M6.5 0.7A1 1 0 1 1 6.4 0.7" />
          </svg>
          Present in Teams
        </button>
        <button className={`${actionClass} w-[53px]`}>
          <svg viewBox="0 0 9 9" className="h-[9px] w-[9px] shrink-0" fill="none" stroke="currentColor">
            <path d="M3 3H1V8H7.5V5.5M3 6Q3.2 3 7 2.8M5.5 0.8L7.8 2.8L5.5 4.8" />
          </svg>
          Share
          <Chevron className="ml-1" />
        </button>
      </div>
    </div>
  );
}

function Ribbon() {
  return (
    <div className="flex h-[62px] shrink-0 border-b border-[#cfcccb]">
      {groups.map((g) => (
        <div key={g.id} className={`relative flex shrink-0 flex-col ${g.width}`}>
          <div className={`flex ${g.pad}`}>
            {g.tools.map((t) => (
              <ToolButton key={t.icon} tool={t} />
            ))}
          </div>
          <div className="flex h-[13px] items-center justify-center pt-[3px] text-[7px] leading-[10px] whitespace-nowrap text-[#444444]">{g.label}</div>
          <span className="absolute top-0 right-0 h-[59px] w-px bg-[#b9b7b6]" />
          {g.id === "illustrations" && (
            <>
              <ShapesMenu />
              <PointerSpot />
            </>
          )}
        </div>
      ))}
      <button aria-label="Collapse ribbon" className="mt-auto mr-[5px] mb-px ml-auto h-2 w-2 text-[#333]">
        <svg viewBox="0 0 8 8" className="h-2 w-2" fill="none" stroke="currentColor" strokeWidth="1.2">
          <path d="M1.5 5.5L4 3L6.5 5.5" />
        </svg>
      </button>
    </div>
  );
}

const viewIcons: [string, string][] = [
  ["Normal view", "M1 1.5H11V10.5H1ZM3 1.5V10.5M5 4H9V8H5ZM5 6H9"],
  ["Slide sorter", "M1 1.5H5V5H1ZM7 1.5H11V5H7ZM1 7H5V10.5H1ZM7 7H11V10.5H7Z"],
  ["Reading view", "M6 2.5V10.5M1 1.5H5L6 2.5L7 1.5H11V9.5H7L6 10.5L5 9.5H1ZM2.5 4H4.5M2.5 6H4.5M7.5 4H9.5M7.5 6H9.5"],
  ["Slide show", "M1 1.5H11M2 1.5V6.5H10V1.5M6 6.5V10.5M4 10.5H8M4 4H8"],
];

function StatusBar() {
  return (
    <footer className="flex h-4 shrink-0 items-center border-t border-b border-t-[#dedbda] border-b-[#1c1c1c] bg-[#f5f2f1] text-[7px] whitespace-nowrap text-[#3a3a3a]">
      <span className="w-[51px] pl-2">Slide 1 of 1</span>
      <button aria-label="Spelling" className="w-[29px] pl-[7px]">
        <svg viewBox="0 0 10 10" className="h-2.5 w-2.5" fill="none" stroke="#444">
          <path d="M5 2V9M1 1.5H4L5 2.2L6 1.5H9V6M1 1.5V8H4L5 9L8.5 7" />
        </svg>
      </button>
      <button className="w-[98px] text-left">English (United Kingdom)</button>
      <button className="flex items-center gap-0.5">
        <svg viewBox="0 0 10 10" className="h-2.5 w-2.5" fill="none" stroke="#444">
          <circle cx="4.5" cy="1.5" r="0.9" />
          <path d="M1 3.3H8M3.2 3.3L2.8 9M5.8 3.3V5.5M5 7.5L6.5 9L9.5 5.5" />
        </svg>
        Accessibility: Good to go
      </button>
      <div className="ml-auto flex h-full items-center pr-[3px]">
        <button className="flex w-[43px] items-center gap-0.5">
          <svg viewBox="0 0 11 10" className="h-2.5 w-[11px]" fill="none" stroke="#333">
            <path d="M0.5 5.5H10.5M0.5 8.5H10.5M3.5 3.5L5.5 1.5L7.5 3.5" />
          </svg>
          Notes
        </button>
        <button className="flex w-[78px] items-center gap-0.5">
          <svg viewBox="0 0 10 10" className="h-2.5 w-2.5" fill="none" stroke="#333">
            <path d="M4 6.5H1V1.5H9V4M1 8.5H4" />
            <circle cx="7" cy="7" r="2" />
          </svg>
          Display Settings
        </button>
        {viewIcons.map(([name, d], i) => (
          <button key={name} aria-label={name} className={`flex h-full w-[27px] items-center justify-center ${i === 0 ? "bg-[#d6d3d2]" : ""}`}>
            <svg viewBox="0 0 12 12" className="h-2.5 w-2.5" fill="none" stroke="#333" strokeWidth="1.1">
              <path d={d} />
            </svg>
          </button>
        ))}
        <button aria-label="Zoom out" className="ml-px w-2">
          <svg viewBox="0 0 8 8" className="h-2 w-2" stroke="#333"><path d="M1.5 4.5H6.5" /></svg>
        </button>
        <input
          type="range"
          aria-label="Zoom"
          min={10}
          max={400}
          defaultValue={218}
          className="mx-[3px] h-2 w-[66px] appearance-none bg-[linear-gradient(#444,#444)] bg-[length:100%_1px] bg-center bg-no-repeat [&::-webkit-slider-thumb]:h-[7px] [&::-webkit-slider-thumb]:w-[3px] [&::-webkit-slider-thumb]:appearance-none [&::-webkit-slider-thumb]:bg-[#222]"
        />
        <button aria-label="Zoom in" className="w-2">
          <svg viewBox="0 0 8 8" className="h-2 w-2" stroke="#333"><path d="M1.5 4.5H6.5M4 2V7" /></svg>
        </button>
        <span className="ml-[7px] w-[26px]">119%</span>
        <button aria-label="Fit slide to window">
          <svg viewBox="0 0 10 10" className="h-2.5 w-2.5" fill="none" stroke="#333" strokeWidth="0.9">
            <path d="M3 3H7V7H3ZM5 0.5V2M5 8V9.5M0.5 5H2M8 5H9.5M4 1.3L5 0.5L6 1.3M4 8.7L5 9.5L6 8.7M1.3 4L0.5 5L1.3 6M8.7 4L9.5 5L8.7 6" />
          </svg>
        </button>
      </div>
    </footer>
  );
}

export default function App() {
  return (
    <div className="flex h-screen flex-col overflow-hidden bg-[#f5f2f1] font-['Open_Sans','Noto_Sans',sans-serif]">
      <TitleBar />
      <TabRow />
      <Ribbon />
      <main className="flex min-h-0 flex-1 bg-[#e6e6e8]">
        <aside className="flex w-[207px] shrink-0 items-start gap-[8px] border-r border-[#b5b5b5] pt-[11px] pl-[8px]">
          <span className="w-[5px] text-[9px] leading-[11px] text-[#d9532c]">1</span>
          <button aria-label="Slide 1" className="h-[171px] w-[171px] border-2 border-[#b7300f] bg-white" />
        </aside>
        <section className="flex min-w-0 flex-1 justify-center pt-[12px] pr-[11px] pb-[14px]">
          <div className="aspect-square h-full border border-[#cfcfcf] bg-white" />
        </section>
      </main>
      <StatusBar />
    </div>
  );
}
